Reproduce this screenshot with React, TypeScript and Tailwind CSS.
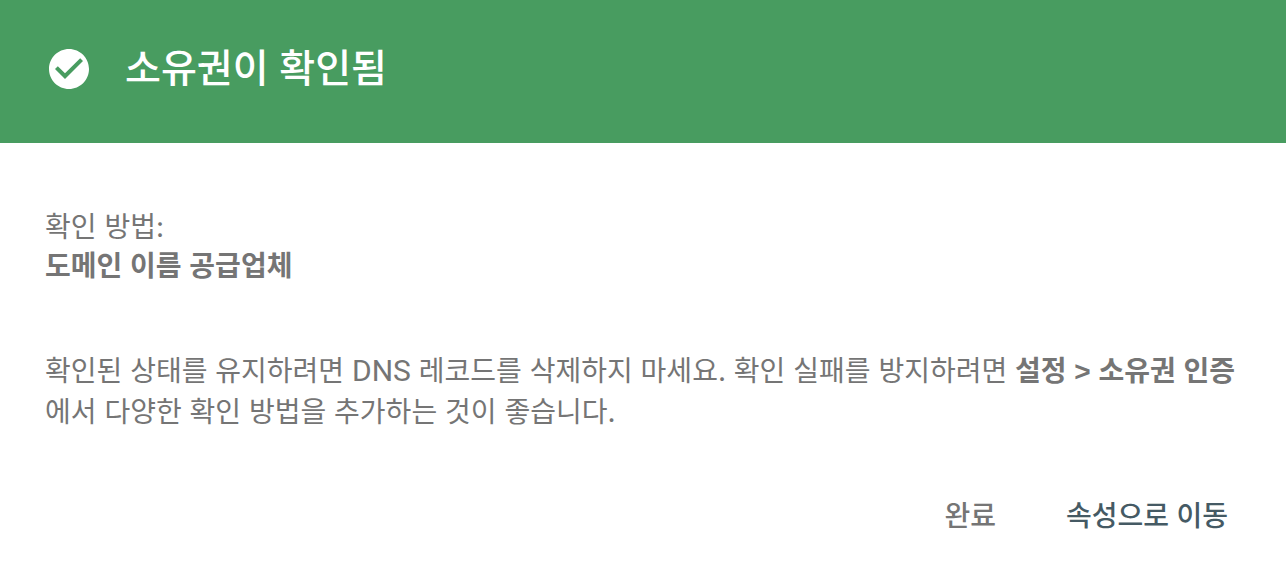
import React from "react";

export default function App() {
  return (
    <main className="min-h-screen bg-white font-['Inter','Noto_Sans_CJK_KR',sans-serif] text-[28px] leading-10 text-[#757575]">
      <header className="flex items-center gap-9 bg-[#489c60] px-[49px] pt-[41px] pb-[46px] text-white">
        <svg viewBox="2 2 20 20" className="size-10 shrink-0" fill="currentColor" aria-hidden="true">
          <path d="M12 2C6.48 2 2 6.48 2 12s4.48 10 10 10 10-4.48 10-10S17.52 2 12 2zm-2 15l-5-5 1.41-1.41L10 14.17l7.59-7.59L19 8l-9 9z" />
        </svg>
        <h1 className="font-['Liberation_Sans','Noto_Sans_CJK_KR',sans-serif] text-[39px] leading-[56px] font-medium">소유권이 확인됨</h1>
      </header>
      <section className="px-[45px] pt-16">
        <p>확인 방법:</p>
        <p className="font-['Liberation_Sans','Noto_Sans_CJK_KR',sans-serif] font-bold">도메인 이름 공급업체</p>
        <p className="mt-16">
          확인된 상태를 유지하려면 <span className="font-['Roboto',sans-serif] text-[30px]">DNS</span> 레코드를 삭제하지 마세요. 확인 실패를 방지하려면{" "}
          <strong className="font-['Liberation_Sans','Noto_Sans_CJK_KR',sans-serif] font-bold">설정 &gt; 소유권 인증</strong>에서 다양한 확인 방법을 추가하는 것이 좋습니다.
        </p>
      </section>
      <footer className="flex justify-end gap-[70px] px-[58px] pt-16">
        <button type="button" className="font-medium">완료</button>
        <button type="button" className="font-medium text-[#455a64]">속성으로 이동</button>
      </footer>
    </main>
  );
}
